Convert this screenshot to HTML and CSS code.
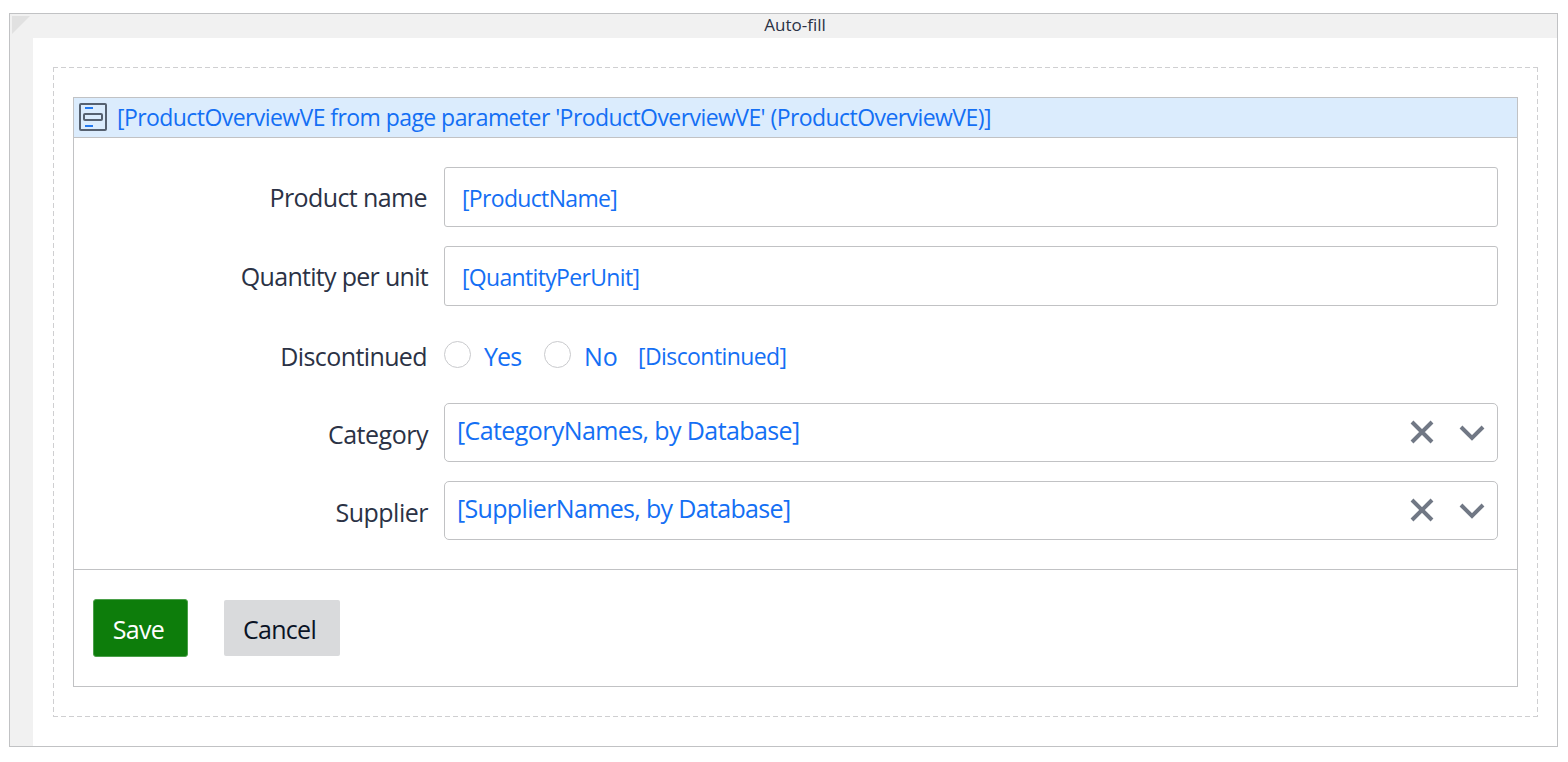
FILE: index.html
```html
<!DOCTYPE html>
<html lang="en">
<head>
<meta charset="utf-8">
<title>Product form</title>
<link rel="stylesheet" href="styles.css">
</head>
<body>
<main class="layout">
  <div class="layout-title"><svg class="corner" width="18" height="18" viewBox="0 0 18 18"><path d="M0 0H18L0 18Z" fill="#e1e1e1"/></svg><span class="t-auto">Auto-fill</span></div>
  <div class="layout-body">
    <div class="column">
      <svg class="dashes" width="1485" height="650" viewBox="0 0 1485 650"><path d="M0 .5H1485M0 649.5H1485M.5 0V650M1484.5 0V650"/></svg>
      <section class="dataview">
        <header class="dv-head">
          <svg width="28" height="28" viewBox="0 0 28 28" fill="none"><rect x="1" y="1" width="26" height="26" rx="1" stroke="#566170" stroke-width="2"/><rect x="5" y="11" width="18" height="6" rx="1" stroke="#566170" stroke-width="2"/><path d="M6 5h8M6 23h8" stroke="#2379f0" stroke-width="2"/></svg>
          <span class="t-head">[ProductOverviewVE from page parameter 'ProductOverviewVE' (ProductOverviewVE)]</span>
        </header>
        <div class="fields">
          <div class="row input-row"><label class="t-product">Product name</label><div class="input t-attr">[ProductName]</div></div>
          <div class="row input-row"><label class="t-quantity">Quantity per unit</label><div class="input t-attr">[QuantityPerUnit]</div></div>
          <div class="row"><label class="t-disc">Discontinued</label>
            <div class="radios"><i class="radio"></i><span class="yes">Yes</span><i class="radio"></i><span class="no">No</span><span class="radio-attr">[Discontinued]</span></div>
          </div>
          <div class="row"><label class="t-category">Category</label>
            <div class="select"><span class="t-catnames">[CategoryNames, by Database]</span>
              <svg width="76" height="24" viewBox="0 0 76 24"><path d="M2 2L22 22M22 2L2 22" stroke-width="3.4"/><path class="chevron" d="M51 7L62 18L73 7"/></svg></div>
          </div>
          <div class="row"><label class="t-supplier">Supplier</label>
            <div class="select"><span class="t-supnames">[SupplierNames, by Database]</span>
              <svg width="76" height="24" viewBox="0 0 76 24"><path d="M2 2L22 22M22 2L2 22" stroke-width="3.4"/><path class="chevron" d="M51 7L62 18L73 7"/></svg></div>
          </div>
        </div>
        <footer class="dv-foot"><button class="save">Save</button><button class="cancel">Cancel</button></footer>
      </section>
    </div>
  </div>
</main>
</body>
</html>
```
FILE: styles.css
```css
* { box-sizing: border-box; }
body { margin: 0; padding: 13px 10px 0 9px; background: #fff; font-family: "Open Sans", "Noto Sans", sans-serif; font-size: 25px; color: #2b3245; }
svg { display: block; flex: none; }
.layout { height: 734px; border: 1px solid #c1c2c4; display: flex; flex-direction: column; }
.layout-title { position: relative; height: 24px; flex: none; background: #f1f1f1; display: flex; justify-content: center; padding-left: 23px; font-size: 17px; line-height: 22px; }
.t-auto { letter-spacing: 0; }
.corner { position: absolute; left: 2px; top: 2px; }
.layout-body { flex: 1; border-left: 23px solid #f1f1f1; padding: 29px 19px 29px 20px; }
.column { position: relative; height: 650px; padding: 30px 20px; }
.dashes { position: absolute; left: 0; top: 0; }
.dashes path { fill: none; stroke: #cfcfd1; stroke-dasharray: 5 3; }
.dataview { height: 590px; border: 1px solid #c1c2c4; background: #fff; }
.dv-head { height: 40px; border-bottom: 1px solid #c1c2c4; background: #dbecfd; display: flex; align-items: center; gap: 10px; padding: 0 0 1px 5px; color: #146ff4; font-size: 23px; }
.t-head { letter-spacing: -0.57px; white-space: nowrap; }
.fields { height: 431px; padding: 29px 19px 0 19px; display: flex; flex-direction: column; gap: 19px; }
.row { height: 59px; display: grid; grid-template-columns: 335px 1fr; column-gap: 16px; align-items: center; white-space: nowrap; }
.input-row { height: 60px; }
.row label { text-align: right; line-height: 36px; padding-top: 2px; }
.input-row label { padding-top: 0; }
.input { height: 60px; border: 1px solid #c1c2c4; border-radius: 3px; display: flex; align-items: center; padding: 2px 0 0 17px; color: #146ff4; }
.row .t-product { letter-spacing: -0.6px; padding-right: 1px; }
.t-quantity { letter-spacing: -0.7px; }
.row .t-disc { letter-spacing: -0.6px; padding-right: 1px; }
.t-category { letter-spacing: -0.48px; }
.t-supplier { letter-spacing: -0.5px; }
.t-attr { font-size: 23px; letter-spacing: -0.67px; }
.radios { display: flex; align-items: center; color: #146ff4; }
.radio { width: 27px; height: 27px; flex: none; border: 1px solid #c9cacd; border-radius: 50%; }
.radios span { padding-top: 2px; }
.yes { width: 73px; padding-left: 13px; letter-spacing: -0.9px; }
.no { width: 67px; padding-left: 13px; }
.radio-attr { font-size: 23px; letter-spacing: -0.58px; }
.select { height: 59px; border: 1px solid #c1c2c4; border-radius: 5px; display: flex; align-items: center; justify-content: space-between; padding: 0 11px 0 12px; color: #146ff4; }
.select span { padding-bottom: 5px; }
.select svg { margin-bottom: 2px; }
.select path { fill: none; stroke: #717885; stroke-width: 4; }
.t-catnames { letter-spacing: -0.6px; }
.t-supnames { letter-spacing: -0.66px; }
.dv-foot { border-top: 1px solid #c1c2c4; padding: 29px 0 0 19px; display: flex; align-items: center; gap: 36px; }
.dv-foot button { font: inherit; border: 0; border-radius: 2px; padding: 0; }
.dv-foot .save { width: 95px; height: 58px; color: #fff; background: #0d7d0b; border: 1px solid #4ba04a; border-radius: 3px; letter-spacing: -0.7px; padding: 1px 4px 0 0; }
.dv-foot .cancel { width: 116px; height: 56px; color: #0a1325; background: #d9dadc; letter-spacing: -0.7px; padding: 1px 5px 0 0; }
```
